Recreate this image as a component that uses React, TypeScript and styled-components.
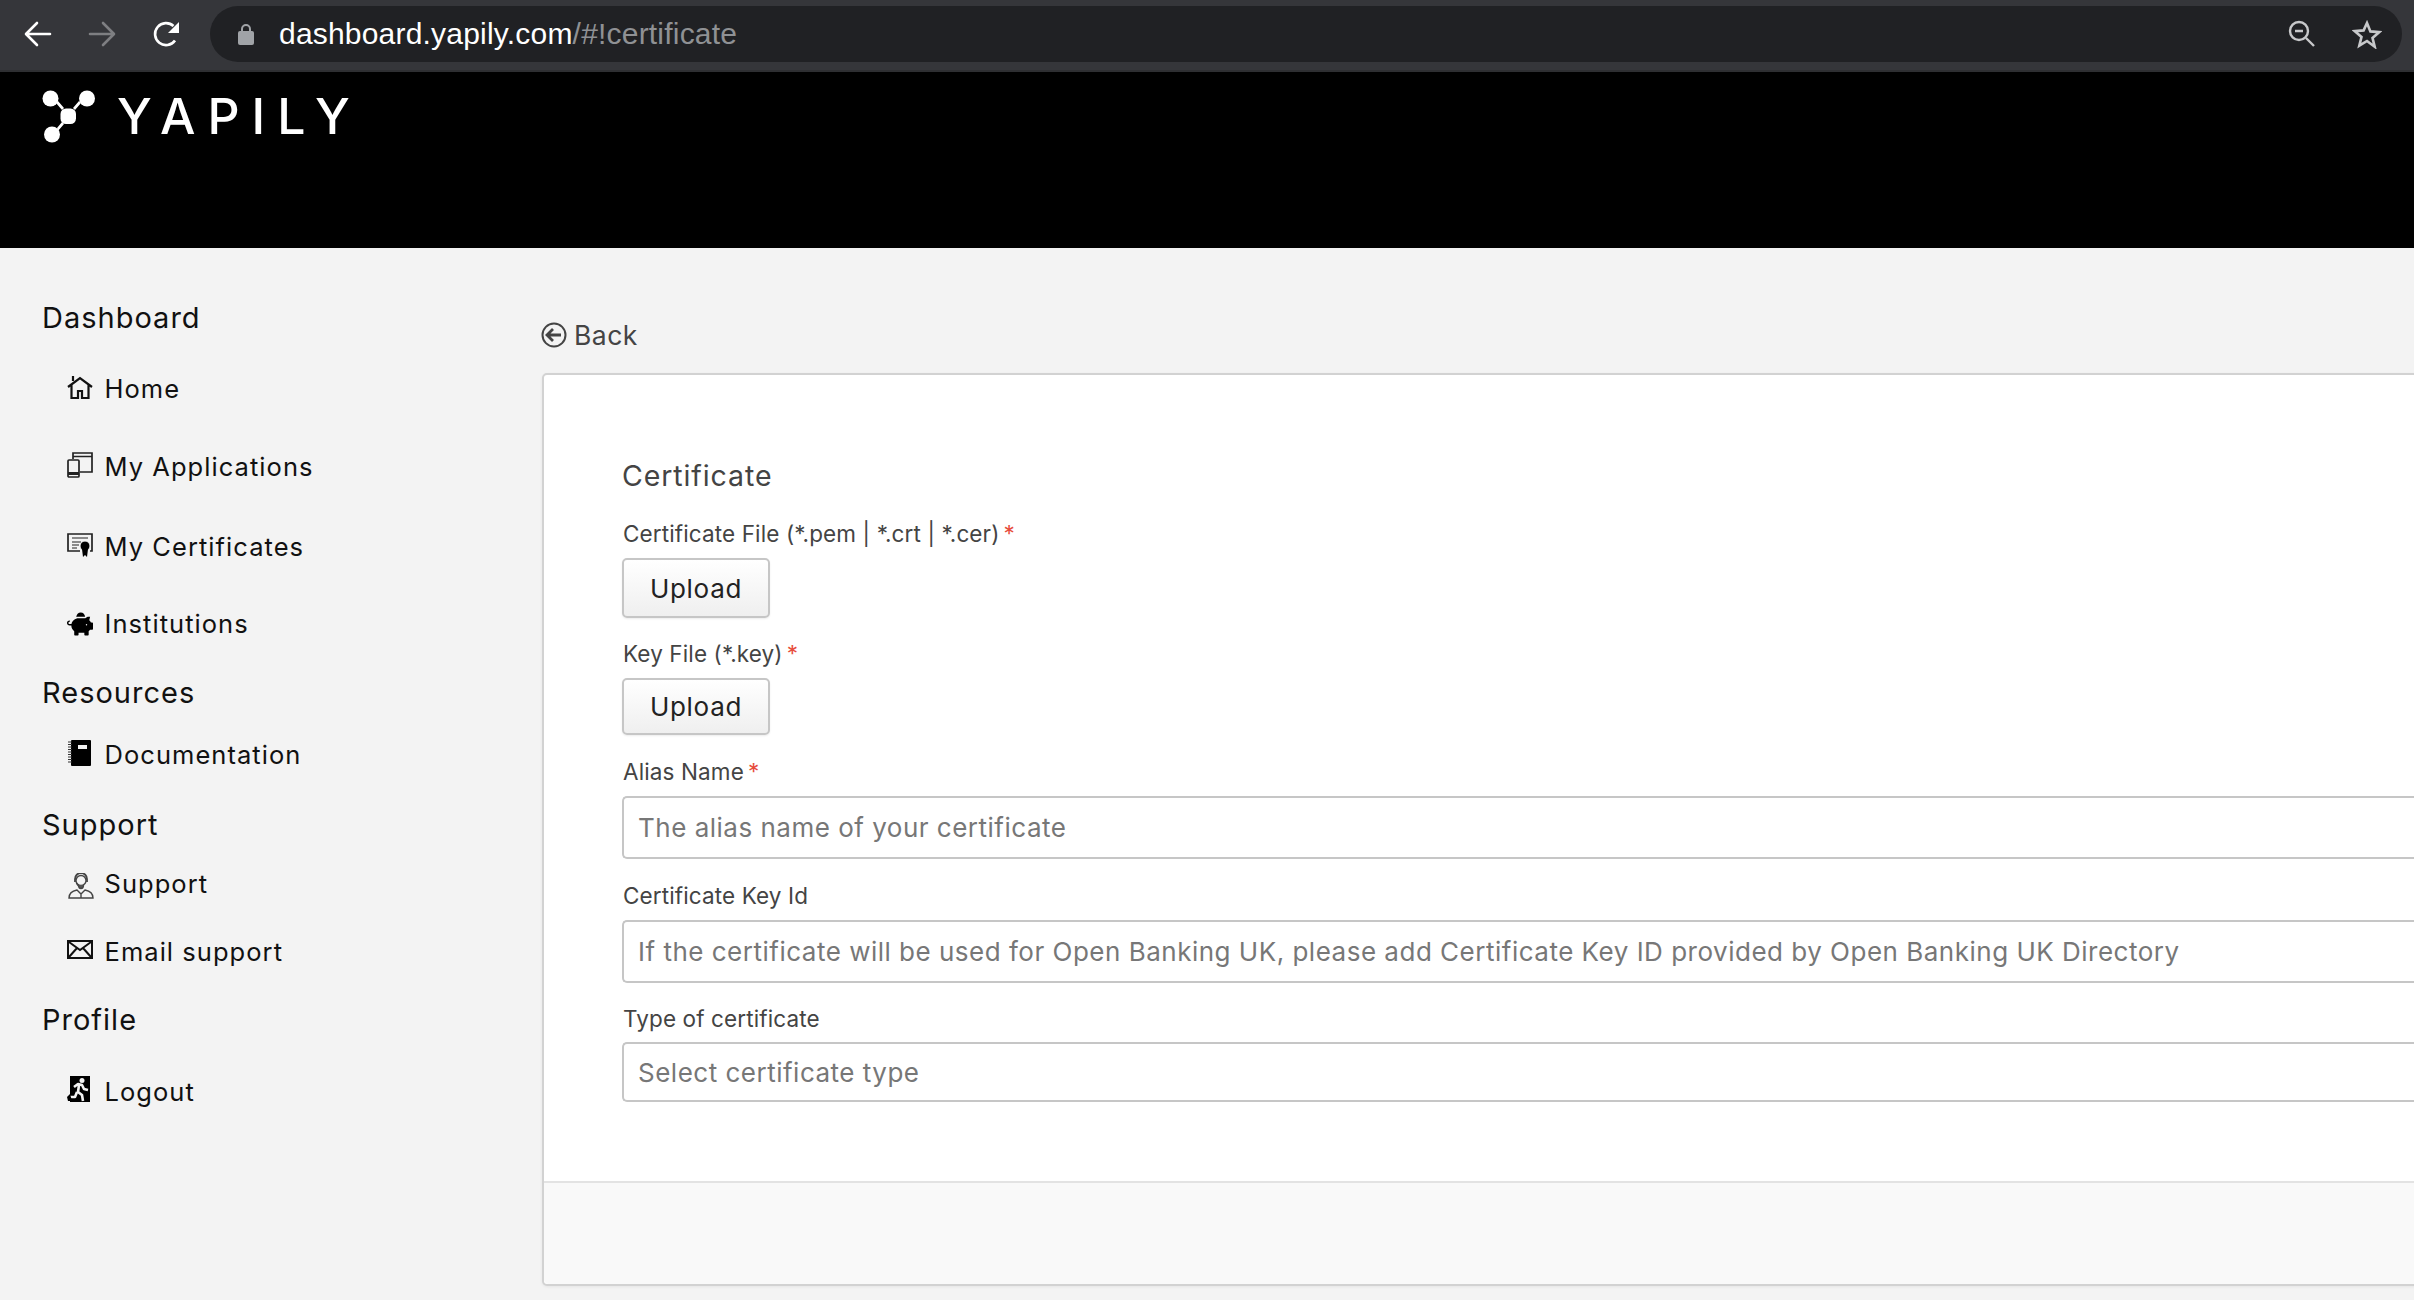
import React from "react";
import styled, { createGlobalStyle } from "styled-components";
import { FaPiggyBank } from "react-icons/fa";

const Global = createGlobalStyle`
  html, body { margin: 0; padding: 0; width: 2414px; height: 1300px; overflow: hidden; background: #f3f3f3; }
  * { box-sizing: border-box; }
`;
const F = `Inter, "Noto Sans", sans-serif`;

const Page = styled.div`
  width: 2414px; height: 1300px; display: flex; flex-direction: column; overflow: hidden; background: #f3f3f3; font-family: ${F};
`;
const BrowserBar = styled.div`
  height: 72px; flex: none; background: #35363a; border-bottom: 2px solid #2e2f32; display: flex; align-items: center; padding: 0 12px 2px 24px;
`;
const NavIcons = styled.div`
  display: flex; align-items: center; gap: 36px; margin-right: 30px;
`;
const UrlPill = styled.div`
  flex: 1; height: 56px; border-radius: 28px; background: #202124; display: flex; align-items: center; padding: 0 20px 0 28px; font-family: "Liberation Sans", sans-serif;
`;
const UrlText = styled.div`
  margin-left: 25px; font-size: 30px; color: #fff; flex: 1; letter-spacing: 0.2px;
  span { color: #8f9194; }
`;
const UrlIcons = styled.div`
  display: flex; align-items: center; gap: 36px;
`;
const Header = styled.header`
  height: 176px; flex: none; background: #000; display: flex; align-items: flex-start; padding: 18px 0 0 42px;
`;
const LogoText = styled.div`
  margin: 4px 0 0 21px; font-size: 50px; line-height: 44px; letter-spacing: 12px; color: #fff; font-weight: 500;
`;
const Body = styled.div`
  flex: 1; display: flex; min-height: 0;
`;
const Sidebar = styled.nav`
  width: 541px; flex: none; padding: 52px 0 0 42px; display: flex; flex-direction: column; color: #111;
`;
const Heading = styled.div<{ $top?: number }>`
  font-size: 29px; line-height: 36px; height: 36px; margin-top: ${p => p.$top ?? 0}px; letter-spacing: 1px; color: #111;
`;
const Item = styled.div<{ $top: number }>`
  display: flex; align-items: center; height: 34px; margin-top: ${p => p.$top}px; padding-left: 25px; font-size: 25.5px; line-height: 34px; letter-spacing: 1.05px; color: #111;
`;
const IconSlot = styled.span<{ $x?: number; $y?: number }>`
  width: 37.5px; height: 34px; flex: none; display: flex; align-items: center; color: #000;
  transform: translate(${p => p.$x ?? 0}px, ${p => p.$y ?? -2}px);
  svg { display: block; }
`;
const Main = styled.main`
  flex: 1; min-width: 0; padding-top: 72px; display: flex; flex-direction: column;
`;
const Back = styled.div`
  display: flex; align-items: center; height: 30px; color: #444; font-size: 26.5px; gap: 7px; letter-spacing: 0.5px;
`;
const Card = styled.section`
  margin: 23px -20px 0 1px; height: 913px; background: #fff; border: 2px solid #d2d2d2; border-radius: 5px; display: flex; flex-direction: column; box-shadow: 0 1px 3px rgba(0,0,0,.06);
`;
const CardBody = styled.div`
  height: 808px; padding: 83px 0 0 77px; border-bottom: 2px solid #e3e3e3;
`;
const CardFooter = styled.div`
  flex: 1; background: #f9f9f9; border-radius: 0 0 5px 5px;
`;
const Title = styled.h2`
  margin: 0 0 0 1px; font-weight: 400; font-size: 28.5px; line-height: 36px; letter-spacing: 0.9px; color: #444;
`;
const Label = styled.div<{ $top: number }>`
  margin: ${p => p.$top}px 0 0 2px; font-size: 22.5px; line-height: 28px; height: 28px; color: #444; letter-spacing: 0.12px;
  b { font-weight: 400; color: #e74c3c; margin-left: 4px; }
`;
const UploadBtn = styled.button<{ $h: number; $top: number }>`
  display: block; width: 148px; height: ${p => p.$h}px; margin: ${p => p.$top}px 0 0 1px; padding: 0; border: 2px solid #c6c6c6; border-radius: 5px;
  background: linear-gradient(#fff, #efefef); color: #222; font-family: ${F}; font-size: 26px; letter-spacing: 0.7px; box-shadow: 0 1px 2px rgba(0,0,0,.08);
`;
const Field = styled.div<{ $h: number; $top: number }>`
  height: ${p => p.$h}px; margin: ${p => p.$top}px 0 0 1px; border: 2px solid #c6c6c6; border-radius: 5px 0 0 5px; border-right: 0; padding-left: 14px;
  display: flex; align-items: center; color: #777; font-size: 26px; letter-spacing: 0.5px; white-space: nowrap;
`;

const Back1 = () => (
  <svg width="28" height="26" viewBox="0 0 28 26" fill="none" stroke="#fff" strokeWidth="2.6" strokeLinecap="round" strokeLinejoin="round"><path d="M26 13H3M13 2 2 13l11 11" /></svg>
);
const Forward = () => (
  <svg width="28" height="26" viewBox="0 0 28 26" fill="none" stroke="#7e7f82" strokeWidth="2.6" strokeLinecap="round" strokeLinejoin="round"><path d="M2 13h23M15 2l11 11-11 11" /></svg>
);
const Reload = () => (
  <svg width="28" height="28" viewBox="0 0 28 28"><path d="M23 20.500A11 11 0 1 1 21.500 6" fill="none" stroke="#fff" strokeWidth="2.600" /><path d="M27 2v11H16z" fill="#fff" /></svg>
);
const Lock = () => (
  <svg width="16" height="22" viewBox="0 0 16 22"><path d="M4 9V6a4 4 0 0 1 8 0v3" fill="none" stroke="#a0a3a7" strokeWidth="2" /><rect y="8" width="16" height="14" rx="2" fill="#a0a3a7" /></svg>
);
const ZoomOut = () => (
  <svg width="28" height="28" viewBox="0 0 28 28" fill="none" stroke="#c7c8ca" strokeWidth="2.400"><circle cx="11" cy="11" r="9" /><path d="M7 11h8M18 18l8 8" /></svg>
);
const Star = () => (
  <svg width="30" height="29" viewBox="0 0 30 29" fill="none" stroke="#c7c8ca" strokeWidth="2.600" strokeLinejoin="miter"><path d="M15 3l3.400 8.400 9 .7-6.900 5.800 2.200 8.800L15 21l-7.700 4.700 2.200-8.800-6.900-5.800 9-.7z" /></svg>
);
const Logo = () => (
  <svg width="54" height="54" viewBox="0 0 54 54" fill="#fff">
    <circle cx="8.500" cy="8.500" r="8" /><circle cx="45" cy="8.500" r="8" /><circle cx="10" cy="44.500" r="8" />
    <rect x="18.500" y="18.500" width="15.500" height="15.500" rx="5.500" />
    <path d="M14 13 20 20 22 18 16 11zM39 13 33 20 31 18 37 11zM15 38 20 32 22 34 16 41z" />
  </svg>
);
const Home = () => (
  <svg width="26" height="24" viewBox="0 0 26 24" fill="none" stroke="#111" strokeWidth="2.200"><path d="M1 12 13 3l12 9M4.500 10v13h6.500v-7h4v7h6.500V10M6 1v5" /></svg>
);
const Apps = () => (
  <svg width="26" height="26" viewBox="0 0 26 26" fill="none" stroke="#222" strokeWidth="1.700">
    <path d="M6 7V1h19v19h-12M6 4.500h19" /><rect x="1" y="8" width="11" height="17" rx="1" fill="#f3f3f3" /><path d="M1 21.500h11" strokeWidth="3" />
  </svg>
);
const Cert = () => (
  <svg width="26" height="25" viewBox="0 0 26 25" fill="none" stroke="#222" strokeWidth="1.700">
    <path d="M13 18H1V1h24v17h-2" /><path d="M5 5h16M5 9h9M5 12h7M5 15h5" strokeWidth="1.200" />
    <circle cx="18" cy="13" r="5" fill="#000" stroke="#f3f3f3" strokeWidth="1" /><path d="M15 16l1 8 2-2 2 2 1-8z" fill="#000" stroke="none" />
  </svg>
);
const Note = () => (
  <svg width="24" height="26" viewBox="0 0 24 26"><rect x="3" y="0" width="20" height="26" rx="1" fill="#000" /><rect x="10" y="5" width="9" height="4" fill="#f3f3f3" /><path d="M0 2h4M0 4.500h4M0 7h4M0 9.500h4M0 12h4M0 14.500h4M0 17h4M0 19.500h4M0 22h4" stroke="#333" strokeWidth="1" /></svg>
);
const Agent = () => (
  <svg width="26" height="26" viewBox="0 0 26 26" fill="none" stroke="#444" strokeWidth="1.400">
    <circle cx="13" cy="7.500" r="5" /><path d="M7 9V6a6 6 0 0 1 12 0v3" strokeWidth="1.800" /><path d="M8.500 10c1 2.500 2.500 3.500 4.500 3.500" />
    <path d="M10.500 12c0 2 1 3.500 2.500 3.500s2.500-1.500 2.500-3.500" fill="#555" />
    <path d="M1 25c0-5 3-7 8-8l4 4 4-4c5 1 8 3 8 8zM13 21v4" />
  </svg>
);
const Mail = () => (
  <svg width="26" height="20" viewBox="0 0 26 20" fill="none" stroke="#111" strokeWidth="2"><rect x="1" y="1" width="24" height="17" /><path d="M2 2l11 8 11-8M2 17l8-9M24 17l-8-9" /></svg>
);
const Exit = () => (
  <svg width="24" height="26" viewBox="0 0 24 26">
    <rect x="3" y="0" width="20" height="26" fill="#000" />
    <circle cx="15" cy="4.500" r="2.500" fill="#f3f3f3" />
    <path d="M7 11l4-3 4 1 2 4 4 1M12 9l-1 7 4 3 1 6M10 16l-2 5-6 0" fill="none" stroke="#f3f3f3" strokeWidth="2.600" strokeLinejoin="round" />
    <path d="M0 21l3-3 2 7H1z" fill="#000" />
  </svg>
);
const BackCircle = () => (
  <svg width="26" height="26" viewBox="0 0 26 26" fill="none" stroke="#444" strokeWidth="2"><circle cx="13" cy="13" r="11.500" /><path d="M20 13H7M12 7l-6 6 6 6" strokeWidth="2.800" /></svg>
);

export default function App() {
  return (
    <Page>
      <Global />
      <BrowserBar>
        <NavIcons><Back1 /><Forward /><Reload /></NavIcons>
        <UrlPill>
          <Lock />
          <UrlText>dashboard.yapily.com<span>/#!certificate</span></UrlText>
          <UrlIcons><ZoomOut /><Star /></UrlIcons>
        </UrlPill>
      </BrowserBar>
      <Header>
        <Logo />
        <LogoText>YAPILY</LogoText>
      </Header>
      <Body>
        <Sidebar>
          <Heading>Dashboard</Heading>
          <Item $top={36}><IconSlot><Home /></IconSlot>Home</Item>
          <Item $top={44}><IconSlot><Apps /></IconSlot>My Applications</Item>
          <Item $top={46}><IconSlot><Cert /></IconSlot>My Certificates</Item>
          <Item $top={43}><IconSlot $y={0}><FaPiggyBank size={26} /></IconSlot>Institutions</Item>
          <Heading $top={34}>Resources</Heading>
          <Item $top={27}><IconSlot $x={1}><Note /></IconSlot>Documentation</Item>
          <Heading $top={35}>Support</Heading>
          <Item $top={24}><IconSlot $x={1} $y={2}><Agent /></IconSlot>Support</Item>
          <Item $top={34}><IconSlot><Mail /></IconSlot>Email support</Item>
          <Heading $top={33}>Profile</Heading>
          <Item $top={37}><IconSlot $y={-3}><Exit /></IconSlot>Logout</Item>
        </Sidebar>
        <Main>
          <Back><BackCircle />Back</Back>
          <Card>
            <CardBody>
              <Title>Certificate</Title>
              <Label $top={26}>Certificate File (*.pem | *.crt | *.cer)<b>*</b></Label>
              <UploadBtn $h={60} $top={10}>Upload</UploadBtn>
              <Label $top={22}>Key File (*.key)<b>*</b></Label>
              <UploadBtn $h={57} $top={10}>Upload</UploadBtn>
              <Label $top={23}>Alias Name<b>*</b></Label>
              <Field $h={63} $top={10}>The alias name of your certificate</Field>
              <Label $top={23}>Certificate Key Id</Label>
              <Field $h={63} $top={10}>If the certificate will be used for Open Banking UK, please add Certificate Key ID provided by Open Banking UK Directory</Field>
              <Label $top={22}>Type of certificate</Label>
              <Field $h={60} $top={9}>Select certificate type</Field>
            </CardBody>
            <CardFooter />
          </Card>
        </Main>
      </Body>
    </Page>
  );
}
